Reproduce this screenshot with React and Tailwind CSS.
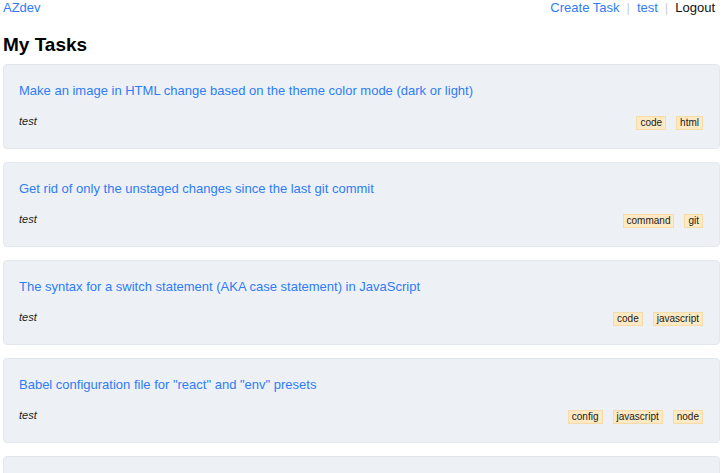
import React from "react";

const tasks = [
  {
    title: "Make an image in HTML change based on the theme color mode (dark or light)",
    author: "test",
    tags: ["code", "html"],
  },
  {
    title: "Get rid of only the unstaged changes since the last git commit",
    author: "test",
    tags: ["command", "git"],
  },
  {
    title: "The syntax for a switch statement (AKA case statement) in JavaScript",
    author: "test",
    tags: ["code", "javascript"],
  },
  {
    title: 'Babel configuration file for "react" and "env" presets',
    author: "test",
    tags: ["config", "javascript", "node"],
  },
  {
    title: "Create a secure one-way hash for a text value (like a password) in Node",
    author: "test",
    tags: ["code", "node"],
  },
];

const TaskCard = ({ task }) => {
  return (
    <div className="bg-[#edf1f6] border border-[#e2e7ee] rounded-[4px] h-[85px] shrink-0 pl-[15px] pr-4 pt-[17px]">
      <a href="#" className="block text-[13px] leading-[18px] text-[#2f7cf6]">
        {task.title}
      </a>
      <div className="flex items-center justify-between mt-[13px]">
        <span className="italic text-[11px] text-[#222]">{task.author}</span>
        <div className="flex gap-[10px] mt-[3px]">
          {task.tags.map((tag) => (
            <span
              key={tag}
              className="bg-[#fde9c4] border border-[#f8dba6] text-[10px] leading-[12px] px-[3px] text-[#1a1a1a]"
            >
              {tag}
            </span>
          ))}
        </div>
      </div>
    </div>
  );
};

const App = () => {
  return (
    <div className="h-[473px] overflow-hidden bg-white font-['Liberation_Sans',Arial,sans-serif]">
      {/* 상단 네비게이션 */}
      <header className="flex items-center justify-between pl-[3px] pr-[8px] h-[16px] text-[13px]">
        <a href="#" className="text-[#2f7cf6]">AZdev</a>
        <nav className="flex items-center gap-[7px]">
          <a href="#" className="text-[#2f7cf6]">Create Task</a>
          <span className="text-[#c8ced6]">|</span>
          <a href="#" className="text-[#2f7cf6]">test</a>
          <span className="text-[#c8ced6]">|</span>
          <a href="#" className="text-[#111]">Logout</a>
        </nav>
      </header>

      <main className="pl-[3px] pr-[3px]">
        <h1 className="font-bold text-[19px] leading-[24px] mt-[17px] mb-[7px] text-black">My Tasks</h1>
        <div className="flex flex-col gap-[13px]">
          {tasks.map((task) => (
            <TaskCard key={task.title} task={task} />
          ))}
        </div>
      </main>
    </div>
  );
};

export default App;
